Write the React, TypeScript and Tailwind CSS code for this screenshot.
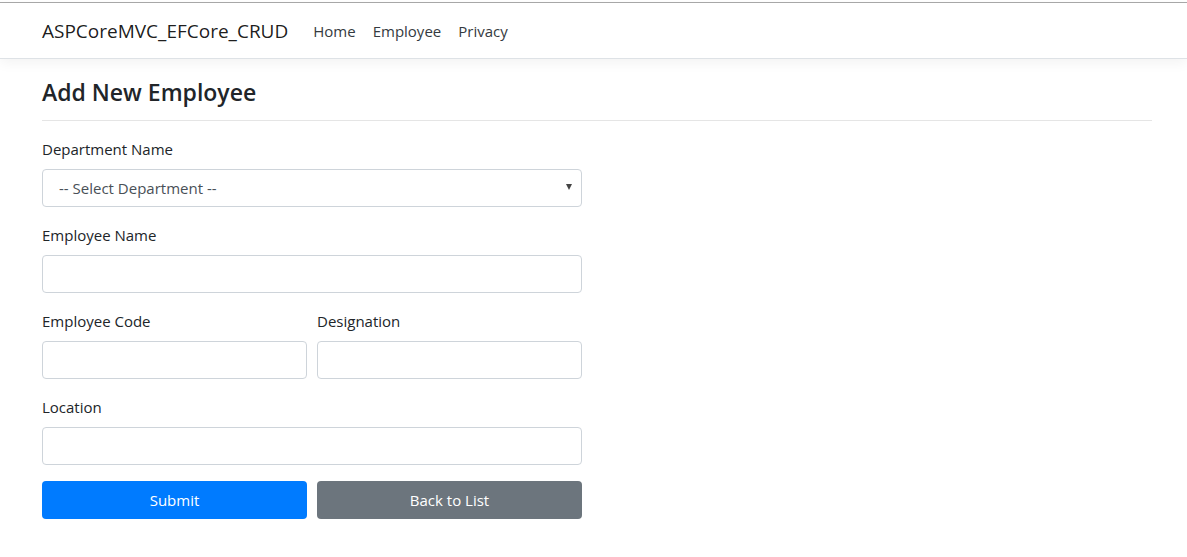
import React from 'react';

const font = { fontFamily: '"Open Sans", "Noto Sans", sans-serif' };

function Field({ label, select }: { label: string; select?: boolean }) {
  return (
    <div className="mb-4">
      <label className="block mb-2 h-6 text-[15px] leading-6 text-[#212529]">{label}</label>
      {select ? (
        <div className="relative">
          <select className="block w-full h-[38px] appearance-none rounded border border-[#ced4da] bg-white pl-[16px] pt-px text-[15px] text-[#495057] outline-none">
            <option>-- Select Department --</option>
          </select>
          <span className="pointer-events-none absolute right-[10px] top-[15px] h-0 w-0 border-x-[3.5px] border-t-[6px] border-x-transparent border-t-[#444]"></span>
        </div>
      ) : (
        <input className="block w-full h-[38px] rounded border border-[#ced4da] bg-white px-3 text-[15px] text-[#495057] outline-none" />
      )}
    </div>
  );
}

export default function App() {
  return (
    <div className="min-h-screen bg-white text-[#212529]" style={font}>
      <div className="h-[2px] bg-white"></div>
      <div className="h-px bg-[#a9a9a9]"></div>
      <header className="h-[56px] bg-white border-b border-[#dee2e6] shadow-[0_4px_12px_rgba(0,0,0,0.05)] mb-4">
        <div className="mx-[42px] h-full flex items-center pt-[2px]">
          <span className="text-[19px] text-[rgba(0,0,0,0.9)] mr-[25px]">ASPCoreMVC_EFCore_CRUD</span>
          <nav className="flex items-center gap-[17px] text-[15px] text-[#343a40]">
            <span>Home</span>
            <span>Employee</span>
            <span>Privacy</span>
          </nav>
        </div>
      </header>
      <main className="mx-[42px] w-[1110px]">
        <h4 className="text-[23px] leading-[28.8px] font-semibold pt-[3px]">Add New Employee</h4>
        <hr className="mt-[13px] mb-4 border-t border-[rgba(0,0,0,0.1)]" />
        <form className="w-[540px]">
          <Field label="Department Name" select />
          <Field label="Employee Name" />
          <div className="grid grid-cols-2 gap-[10px]">
            <Field label="Employee Code" />
            <Field label="Designation" />
          </div>
          <Field label="Location" />
          <div className="grid grid-cols-2 gap-[10px]">
            <button type="button" className="h-[38px] rounded bg-[#007bff] text-white text-[15px] pt-px">Submit</button>
            <button type="button" className="h-[38px] rounded bg-[#6c757d] text-white text-[15px] pt-px">Back to List</button>
          </div>
        </form>
      </main>
    </div>
  );
}
